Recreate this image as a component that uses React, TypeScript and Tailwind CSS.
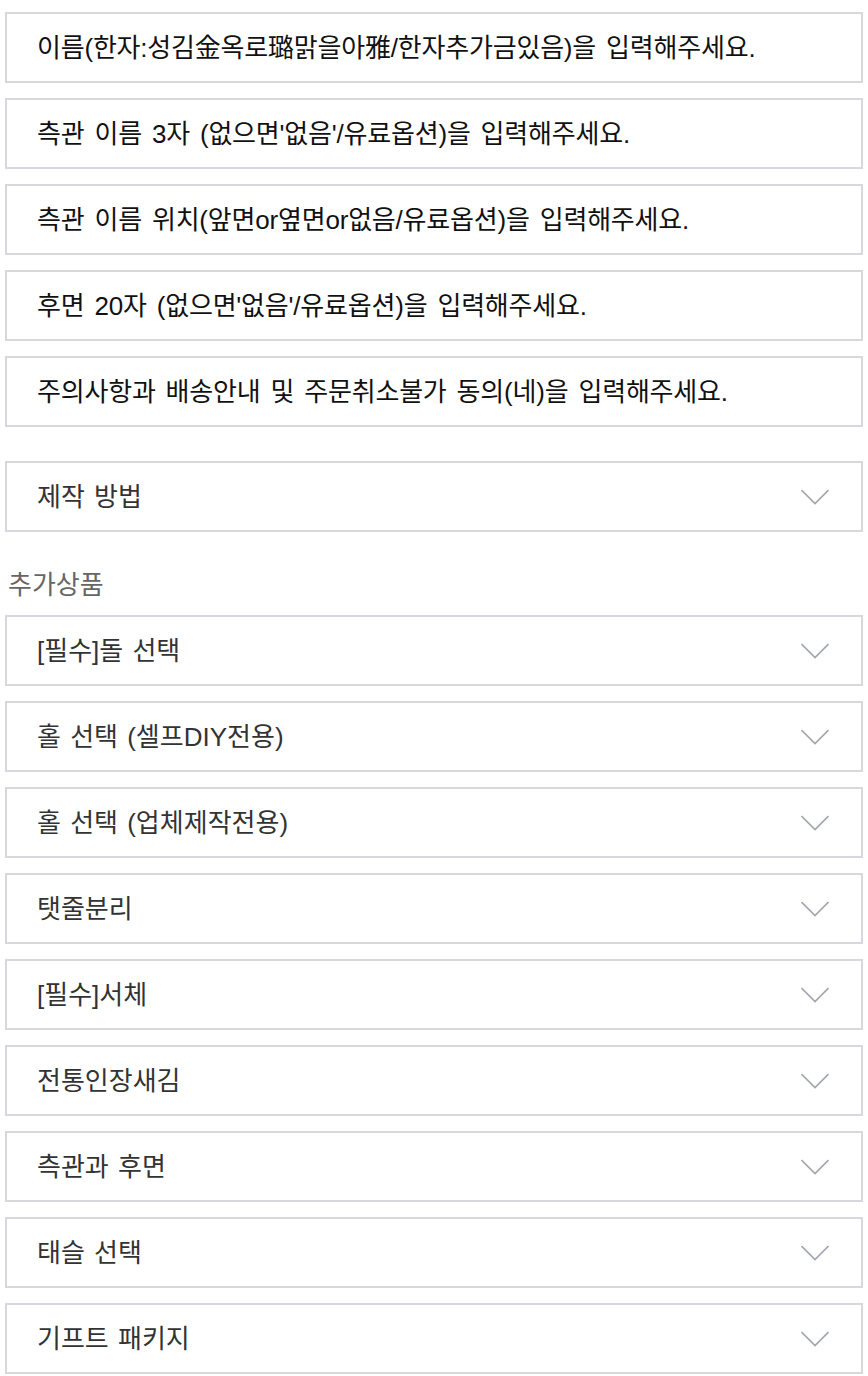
const inputs = [
  "이름(한자:성김金옥로璐맑을아雅/한자추가금있음)을 입력해주세요.",
  "측관 이름 3자 (없으면'없음'/유료옵션)을 입력해주세요.",
  "측관 이름 위치(앞면or옆면or없음/유료옵션)을 입력해주세요.",
  "후면 20자 (없으면'없음'/유료옵션)을 입력해주세요.",
  "주의사항과 배송안내 및 주문취소불가 동의(네)을 입력해주세요.",
];

const extras = [
  "[필수]돌 선택",
  "홀 선택 (셀프DIY전용)",
  "홀 선택 (업체제작전용)",
  "탯줄분리",
  "[필수]서체",
  "전통인장새김",
  "측관과 후면",
  "태슬 선택",
  "기프트 패키지",
];

const font = { fontFamily: '"Liberation Sans", "Noto Sans CJK KR", sans-serif' };

function Chevron() {
  return (
    <svg width="28" height="16" viewBox="0 0 28 16" fill="none" className="shrink-0">
      <path d="M0.5 1 L14 14.5 L27.5 1" stroke="#a3a7ae" strokeWidth="1.7" />
    </svg>
  );
}

function SelectRow({ label }: { label: string }) {
  return (
    <div className="flex h-[71px] items-center justify-between border-2 border-[#d6d8dd] bg-white pl-[30px] pr-[32px]">
      <span className="text-[26px] leading-none text-[#333] [word-spacing:2px]">{label}</span>
      <Chevron />
    </div>
  );
}

export default function App() {
  return (
    <div className="min-h-[1376px] w-[868px] bg-white px-[5px] pt-[12px]" style={font}>
      <div className="flex flex-col gap-[15px]">
        {inputs.map((text, i) => (
          <div
            key={i}
            className="flex h-[71px] items-center border-2 border-[#d6d8dd] bg-white pl-[30px]"
          >
            <span className="whitespace-nowrap text-[26px] leading-none tracking-[-0.2px] text-[#111] [word-spacing:3px]">
              {text}
            </span>
          </div>
        ))}
      </div>

      <div className="mt-[34px]">
        <SelectRow label="제작 방법" />
      </div>

      <div className="pb-[15px] pl-[3px] pt-[39px] text-[26px] leading-[29px] text-[#666]">추가상품</div>

      <div className="flex flex-col gap-[15px]">
        {extras.map((label, i) => (
          <SelectRow key={i} label={label} />
        ))}
      </div>
    </div>
  );
}
